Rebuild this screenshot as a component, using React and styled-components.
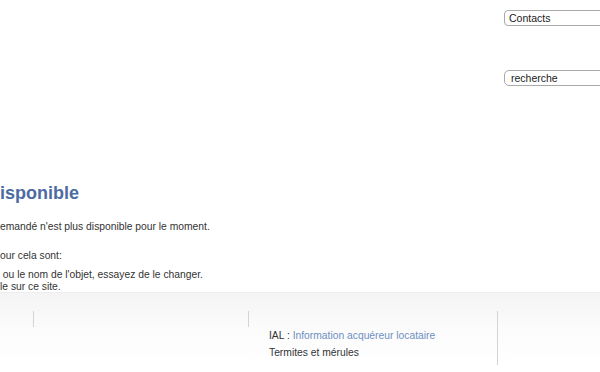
import styled, { createGlobalStyle } from "styled-components";

const GlobalStyle = createGlobalStyle`
    html, body {
        margin: 0;
        padding: 0;
        background: #FFFFFF;
        overflow: hidden;
    }

    body {
        font-family: "Liberation Sans", Arial, Helvetica, sans-serif;
        color: #333333;
    }
`;

const App = () => {
    return (
        <Page>
            <GlobalStyle />
            <Header>
                <Tools>
                    <Select defaultValue="contacts">
                        <option value="contacts">Contacts</option>
                    </Select>
                    <Search type="text" defaultValue="recherche" />
                </Tools>
            </Header>

            <Content>
                <Title>isponible</Title>
                <Text>emandé n'est plus disponible pour le moment.</Text>
                <Text $gap={16}>our cela sont:</Text>
                <List>
                    <Item>&nbsp;ou le nom de l'objet, essayez de le changer.</Item>
                    <Item>le sur ce site.</Item>
                </List>
            </Content>

            <Footer>
                <Column $width={33} />
                <Column $width={215}>
                    <Rule $height={16} />
                </Column>
                <Column $width={249}>
                    <Rule $height={16} />
                    <Links>
                        <Link>
                            IAL : <Blue>Information acquéreur locataire</Blue>
                        </Link>
                        <Link>Termites et mérules</Link>
                    </Links>
                </Column>
                <Column>
                    <Rule $height={54} />
                </Column>
            </Footer>
        </Page>
    );
};

const Page = styled.div`
    width: 600px;
    height: 372px;
    overflow: hidden;
`;

const Header = styled.header`
    display: flex;
    justify-content: flex-end;

    height: 182px;
    padding-top: 10px;
    box-sizing: border-box;
`;

const Tools = styled.div`
    display: flex;
    flex-direction: column;
    gap: 44px;

    width: 96px;
`;

const Select = styled.select`
    appearance: none;
    width: 112px;
    height: 16px;
    padding: 0 0 0 4px;

    font-family: inherit;
    font-size: 10.5px;
    line-height: 14px;
    color: #222222;

    border: 1px solid #a9a9a9;
    border-radius: 4px;
    background: #FFFFFF;
    outline: none;
`;

const Search = styled.input`
    appearance: none;
    width: 112px;
    height: 16px;
    padding: 0 0 0 6px;
    box-sizing: border-box;

    font-family: inherit;
    font-size: 10.5px;
    color: #222222;

    border: 1px solid #a9a9a9;
    border-radius: 5px;
    background: #FFFFFF;
    outline: none;
`;

const Content = styled.main`
    height: 110px;
`;

const Title = styled.h1`
    margin: 0 0 16px;

    font-size: 18px;
    line-height: 22px;
    font-weight: bold;
    color: #4d6ba2;
`;

const Text = styled.p`
    margin: ${(p) => p.$gap || 0}px 0 0;

    font-size: 10.3px;
    line-height: 13px;
    color: #333333;
`;

const List = styled.ul`
    margin: 7px 0 0;
    padding: 0;
    list-style: none;
`;

const Item = styled.li`
    font-size: 10.3px;
    line-height: 12px;
    color: #333333;
`;

const Footer = styled.footer`
    display: flex;

    height: 80px;
    padding-top: 18px;
    box-sizing: border-box;

    border-top: 1px solid #eeeeee;
    background: linear-gradient(to bottom, #f4f4f4 0px, #fbfbfb 35px, #FFFFFF 70px);
`;

const Column = styled.div`
    display: flex;
    align-items: flex-start;

    flex: ${(p) => (p.$width ? `0 0 ${p.$width}px` : "1")};
`;

const Rule = styled.div`
    width: 1px;
    height: ${(p) => p.$height}px;
    background: #d4d4d4;
`;

const Links = styled.div`
    display: flex;
    flex-direction: column;
    gap: 4px;

    margin-top: 18px;
    padding-left: 20px;
`;

const Link = styled.span`
    font-size: 10.3px;
    line-height: 13px;
    color: #333333;
`;

const Blue = styled.span`
    color: #6f8fc2;
`;

export default App;
